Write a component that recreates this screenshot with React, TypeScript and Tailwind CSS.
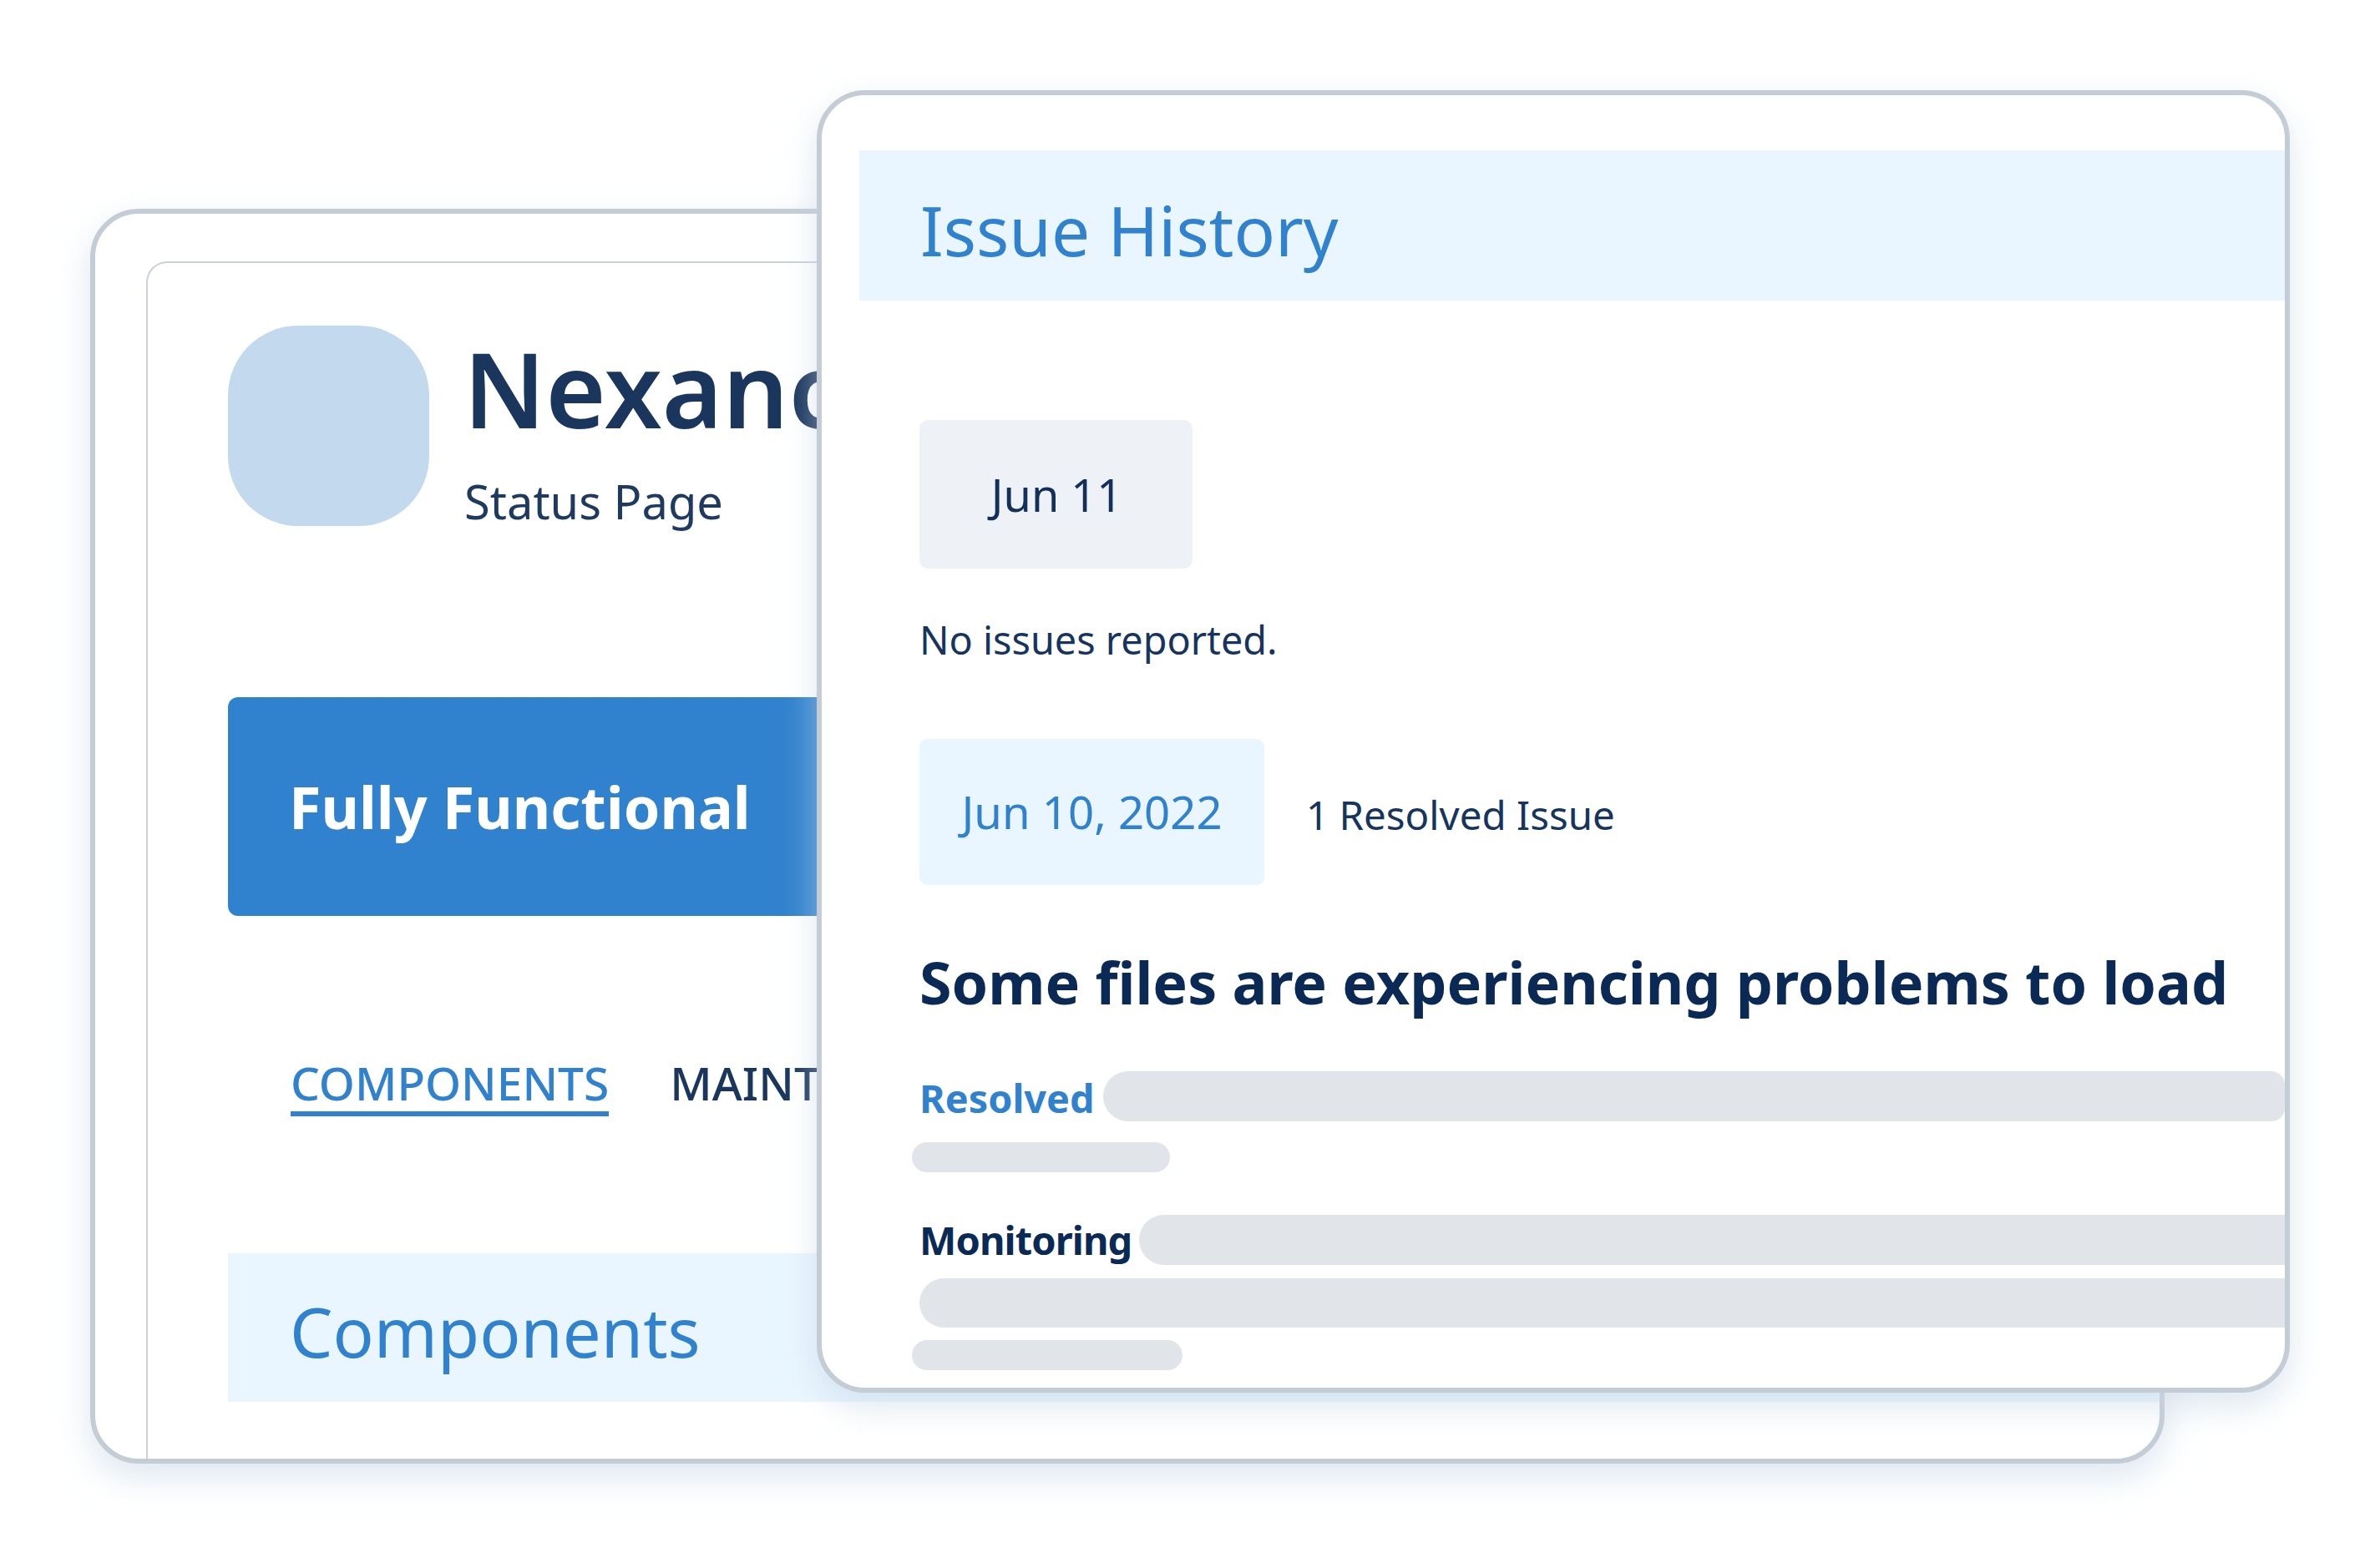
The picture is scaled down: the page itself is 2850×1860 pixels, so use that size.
const font = { fontFamily: '"Noto Sans", "Open Sans", sans-serif' };

const App = () => {
  return (
    <div style={font} className="relative w-[2850px] h-[1860px] bg-white overflow-hidden">
      {/* back window: status page */}
      <div className="absolute left-[108px] top-[250px] w-[2484px] h-[1503px] border-[6px] border-[#c4cdd6] rounded-[58px] bg-white overflow-hidden pl-[61px] pt-[57px] shadow-[0_16px_40px_rgba(200,215,230,0.6)]">
        <div className="h-full border-l-2 border-t-2 border-[#c9d0da] rounded-tl-[25px] pl-[96px] pt-[75px]">
          <div className="flex gap-[41px]">
            <div className="w-[241px] h-[240px] rounded-[84px] bg-[#c3d9ee]" />
            <div className="flex flex-col pt-[5px]">
              <div className="text-[124px] leading-[140px] font-semibold text-[#1a365d] whitespace-nowrap">Nexanc</div>
              <div className="mt-[30px] ml-[1px] text-[56px] leading-[70px] text-[#1f3a5f]">Status Page</div>
            </div>
          </div>

          <div className="mt-[200px] h-[262px] rounded-[12px] bg-[#3182ce] flex items-center pl-[73px]">
            <span className="text-[70px] font-bold text-white">Fully Functional</span>
          </div>

          <div className="mt-[170px] ml-[75px] flex gap-[73px]">
            <div className="text-[55px] leading-[60px] pb-1 border-b-[6px] border-[#3182ce] font-medium text-[#3182ce]">COMPONENTS</div>
            <div className="text-[55px] leading-[60px] font-medium text-[#1a365d]">MAINT</div>
          </div>

          <div className="mt-[164px] h-[178px] bg-[#e9f6ff] flex items-center pl-[74px] pt-[10px]">
            <span className="text-[81.5px] text-[#3182ce]">Components</span>
          </div>
        </div>
      </div>

      {/* front window: issue history */}
      <div className="absolute left-[978px] top-[108px] w-[1764px] h-[1560px] border-[6px] border-[#c4cdd6] rounded-[58px] bg-white overflow-hidden pt-[66px] shadow-[0_16px_40px_rgba(200,215,230,0.6)]">
        <div className="ml-[45px] h-[180px] bg-[#e9f6ff] flex items-center pl-[73px] pt-[10px]">
          <span className="text-[82px] text-[#3182ce]">Issue History</span>
        </div>

        <div className="pl-[117px]">
          <div className="mt-[143px] w-[327px] h-[178px] rounded-[10px] bg-[#eef2f7] flex items-center justify-center pl-[2px] text-[54px] text-[#12305a]">
            Jun 11
          </div>
          <div className="mt-[55px] text-[46.8px] leading-[60px] text-[#17355c]">No issues reported.</div>

          <div className="mt-[89px] flex items-center gap-[50px]">
            <div className="w-[413px] h-[175px] rounded-[10px] bg-[#e9f6ff] flex items-center justify-center text-[54.5px] text-[#3182ce]">
              Jun 10, 2022
            </div>
            <span className="text-[47.5px] pt-[6px] text-[#17355c]">1 Resolved Issue</span>
          </div>

          <div className="mt-[71px] text-[70px] leading-[90px] font-bold text-[#0a2a55] whitespace-nowrap">
            Some files are experiencing problems to load
          </div>

          <div className="mt-[62px] h-[60px] flex items-center gap-[10px]">
            <span className="text-[46.8px] leading-[56px] pt-[4px] font-bold text-[#3182ce]">Resolved</span>
            <div className="flex-1 h-[60px] rounded-[30px] rounded-r-[16px] bg-[#e1e5ea]" />
          </div>
          <div className="mt-[25px] -ml-[9px] w-[309px] h-[36px] rounded-[18px] bg-[#e1e5ea]" />

          <div className="mt-[51px] h-[60px] flex items-center gap-[9px]">
            <span className="text-[47px] leading-[60px] tracking-[-0.9px] font-bold text-[#0a2a55]">Monitoring</span>
            <div className="flex-1 h-[60px] rounded-l-[30px] bg-[#e1e5ea]" />
          </div>
          <div className="mt-[16px] h-[59px] rounded-l-[30px] bg-[#e1e5ea]" />
          <div className="mt-[15px] -ml-[9px] w-[324px] h-[36px] rounded-[18px] bg-[#e1e5ea]" />
        </div>
      </div>
    </div>
  );
};

export default App;
